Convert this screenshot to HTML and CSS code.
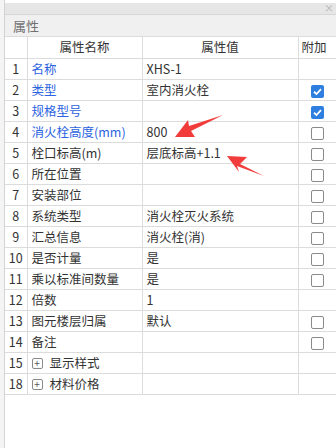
FILE: index.html
```html
<!DOCTYPE html>
<html lang="zh-CN">
<head>
    <meta charset="UTF-8">
    <meta name="viewport" content="width=device-width, initial-scale=1.0">
    <title>属性</title>
    <link rel="stylesheet" href="styles.css">
</head>
<body>
    <div class="panel">
        <div class="titlebar"><span class="close">×</span></div>
        <div class="caption">属性</div>
        <table class="props">
            <colgroup>
                <col class="c-idx">
                <col class="c-name">
                <col class="c-value">
                <col class="c-extra">
            </colgroup>
            <thead>
                <tr>
                    <th class="idx"></th>
                    <th class="name">属性名称</th>
                    <th class="value">属性值</th>
                    <th class="extra">附加</th>
                </tr>
            </thead>
            <tbody>
                <tr><td class="idx">1</td><td class="name blue">名称</td><td class="value">XHS-1</td><td class="extra"></td></tr>
                <tr><td class="idx">2</td><td class="name blue">类型</td><td class="value">室内消火栓</td><td class="extra"><span class="check on"></span></td></tr>
                <tr><td class="idx">3</td><td class="name blue">规格型号</td><td class="value"></td><td class="extra"><span class="check on"></span></td></tr>
                <tr><td class="idx">4</td><td class="name blue">消火栓高度(mm)</td><td class="value">800</td><td class="extra"><span class="check"></span></td></tr>
                <tr><td class="idx">5</td><td class="name">栓口标高(m)</td><td class="value">层底标高+1.1</td><td class="extra"><span class="check"></span></td></tr>
                <tr><td class="idx">6</td><td class="name">所在位置</td><td class="value"></td><td class="extra"><span class="check"></span></td></tr>
                <tr><td class="idx">7</td><td class="name">安装部位</td><td class="value"></td><td class="extra"><span class="check"></span></td></tr>
                <tr><td class="idx">8</td><td class="name">系统类型</td><td class="value">消火栓灭火系统</td><td class="extra"><span class="check"></span></td></tr>
                <tr><td class="idx">9</td><td class="name">汇总信息</td><td class="value">消火栓(消)</td><td class="extra"><span class="check"></span></td></tr>
                <tr><td class="idx">10</td><td class="name">是否计量</td><td class="value">是</td><td class="extra"><span class="check"></span></td></tr>
                <tr><td class="idx">11</td><td class="name">乘以标准间数量</td><td class="value">是</td><td class="extra"><span class="check"></span></td></tr>
                <tr><td class="idx">12</td><td class="name">倍数</td><td class="value">1</td><td class="extra"></td></tr>
                <tr><td class="idx">13</td><td class="name">图元楼层归属</td><td class="value">默认</td><td class="extra"><span class="check"></span></td></tr>
                <tr><td class="idx">14</td><td class="name">备注</td><td class="value"></td><td class="extra"><span class="check"></span></td></tr>
                <tr><td class="idx">15</td><td class="name"><span class="expand">+</span>显示样式</td><td class="value"></td><td class="extra"></td></tr>
                <tr><td class="idx">18</td><td class="name"><span class="expand">+</span>材料价格</td><td class="value"></td><td class="extra"></td></tr>
            </tbody>
        </table>
    </div>

    <!-- 标注箭头 -->
    <svg class="marks" width="336" height="448" viewBox="0 0 336 448">
        <polygon points="223,115 191,131 195,137 175,137 188,120 189,126" fill="#f23b3b"/>
        <polygon points="264,176 240,164 247,157 227,156 239,172 237,166" fill="#f23b3b"/>
    </svg>
</body>
</html>
```

FILE: styles.css
```css
body {
    margin: 0;
    background: #f4f4f4;
    font-family: "Noto Sans CJK SC", "Microsoft YaHei", sans-serif;
    font-size: 12.5px;
    color: #333;
    height: 448px;
    overflow: hidden;
}
.panel {
    margin-left: 4px;
    padding-top: 3px;
    height: 445px;
    background: #fff;
    border-left: 1px solid #d3d3d3;
}
.titlebar {
    height: 11px;
    background: #e6e6e6;
    border-bottom: 1px solid #d6d6d6;
    position: relative;
}
.titlebar .close {
    position: absolute;
    right: 2px;
    top: -2px;
    font-size: 10px;
    line-height: 14px;
    color: #b0b0b0;
}
.caption {
    height: 21px;
    line-height: 21px;
    padding-left: 8px;
    background: #f0f0f0;
    color: #707070;
    font-size: 13px;
    border-bottom: 1px solid #dcdcdc;
}
.props {
    border-collapse: collapse;
    width: 331px;
    table-layout: fixed;
}
.c-idx { width: 22px; }
.c-name { width: 115px; }
.c-value { width: 156px; }
.c-extra { width: 38px; }
.props tr {
    height: 21px;
}
.props th,
.props td {
    padding: 0 4px;
    border: 1px solid #dcdcdc;
    font-weight: normal;
    white-space: nowrap;
    overflow: hidden;
    line-height: 20px;
}
.props tr > :first-child {
    border-left: none;
}
.props tr > :last-child {
    border-right: none;
}
.props thead th {
    border-top: none;
    color: #333;
}
.props .idx {
    padding: 0;
    text-align: center;
}
.props th.value,
.props th.name {
    text-align: center;
}
.props .extra {
    padding: 0;
    text-align: center;
}
.props th.extra {
    text-align: left;
    padding-left: 3px;
}
.blue {
    color: #2b63e0;
}
.check {
    display: inline-block;
    box-sizing: border-box;
    width: 13px;
    height: 13px;
    border: 1px solid #8a8a8a;
    border-radius: 2px;
    vertical-align: middle;
    margin-top: 1px;
    background: #fff;
}
.check.on {
    border: none;
    background: #2f7fe0 url("data:image/svg+xml,%3Csvg xmlns='http://www.w3.org/2000/svg' width='13' height='13'%3E%3Cpath d='M3 6.8 L5.5 9 L10 4.2' fill='none' stroke='white' stroke-width='1.8'/%3E%3C/svg%3E") no-repeat center;
}
.expand {
    display: inline-block;
    box-sizing: border-box;
    width: 11px;
    height: 11px;
    border: 1px solid #8a8a8a;
    border-radius: 2px;
    font-size: 10px;
    line-height: 8px;
    text-align: center;
    color: #555;
    vertical-align: middle;
    margin: -2px 7px 0 0;
}
.marks {
    position: absolute;
    left: 0;
    top: 0;
    pointer-events: none;
}
```
